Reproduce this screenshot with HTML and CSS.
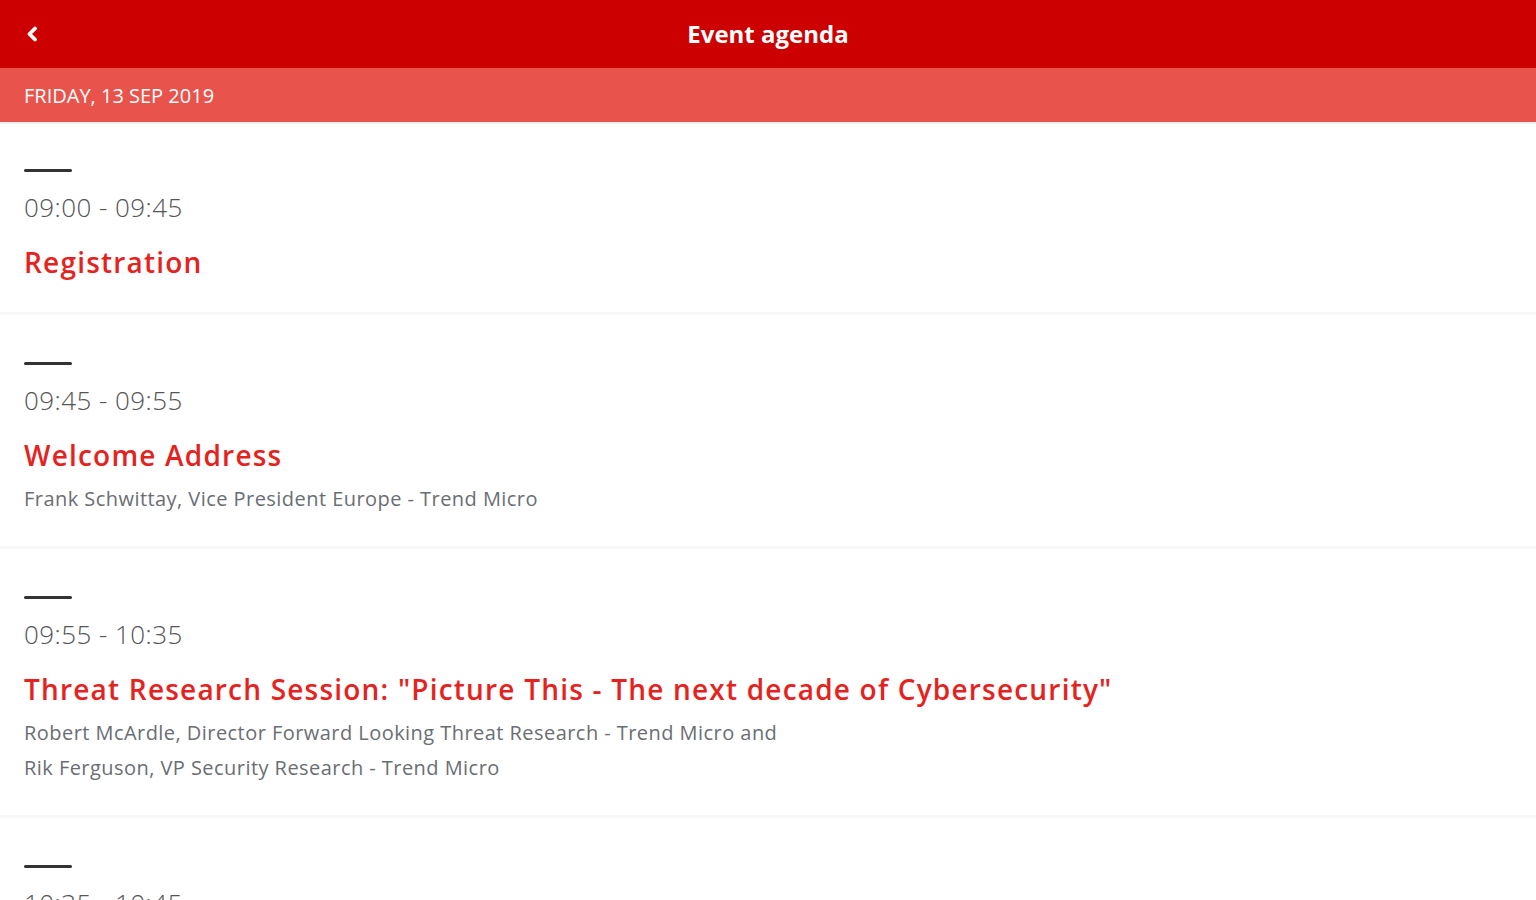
FILE: index.html
```html
<!DOCTYPE html>
<html lang="en">
<head>
<meta charset="utf-8">
<title>Event agenda</title>
<link rel="stylesheet" href="styles.css">
</head>
<body>
<header class="topbar">
  <span class="back">
    <svg width="14" height="16" viewBox="0 0 14 16"><path d="M10 2.5 L4.5 8 L10 13.5" fill="none" stroke="#fff" stroke-width="3.8" stroke-linecap="round" stroke-linejoin="round"/></svg>
  </span>
  <h1 class="title">Event agenda</h1>
</header>
<div class="dayhead">FRIDAY, 13 SEP 2019</div>
<main class="agenda">
  <section class="item">
    <div class="dash"></div>
    <div class="time">09:00 - 09:45</div>
    <div class="name">Registration</div>
  </section>
  <section class="item">
    <div class="dash"></div>
    <div class="time">09:45 - 09:55</div>
    <div class="name">Welcome Address</div>
    <div class="speaker">Frank Schwittay, Vice President Europe - Trend Micro</div>
  </section>
  <section class="item">
    <div class="dash"></div>
    <div class="time">09:55 - 10:35</div>
    <div class="name">Threat Research Session: "Picture This - The next decade of Cybersecurity"</div>
    <div class="speaker">Robert McArdle, Director Forward Looking Threat Research - Trend Micro and<br>Rik Ferguson, VP Security Research - Trend Micro</div>
  </section>
  <section class="item">
    <div class="dash"></div>
    <div class="time">10:35 - 10:45</div>
    <div class="name">Break</div>
  </section>
</main>
</body>
</html>
```

FILE: styles.css
```css
html, body {
  margin: 0;
  padding: 0;
  background: #ffffff;
  font-family: "Open Sans", "Noto Sans", sans-serif;
  overflow: hidden;
  height: 900px;
}
.topbar {
  height: 68px;
  background: #cc0000;
  display: flex;
  align-items: center;
  justify-content: center;
  position: relative;
}
.back {
  position: absolute;
  left: 25px;
  top: 26px;
  width: 14px;
  height: 16px;
  display: block;
}
.back svg { display: block; }
.title {
  margin: 0;
  color: #ffffff;
  font-size: 24px;
  font-weight: 700;
  letter-spacing: 0;
  line-height: 66px;
}
.dayhead {
  height: 54px;
  background: #e8534b;
  color: #ffffff;
  font-size: 20px;
  letter-spacing: 0;
  line-height: 56px;
  padding-left: 24px;
  box-shadow: 0 1px 2px rgba(0,0,0,0.12);
  position: relative;
}
.item {
  padding: 47px 24px 30px;
  border-bottom: 3px solid #f7f7f7;
}
.dash {
  width: 48px;
  height: 3px;
  background: #333333;
  border-radius: 2px;
  margin-bottom: 18px;
}
.time {
  font-size: 26px;
  font-weight: 300;
  color: #555555;
  line-height: 34px;
  letter-spacing: 0.45px;
  margin-bottom: 18px;
}
.name {
  font-size: 28px;
  font-weight: 600;
  color: #e5231e;
  line-height: 40px;
  letter-spacing: 1.2px;
}
.speaker {
  margin-top: 6px;
  font-size: 20px;
  color: #6a6e74;
  line-height: 35px;
  letter-spacing: 0.45px;
}
```
